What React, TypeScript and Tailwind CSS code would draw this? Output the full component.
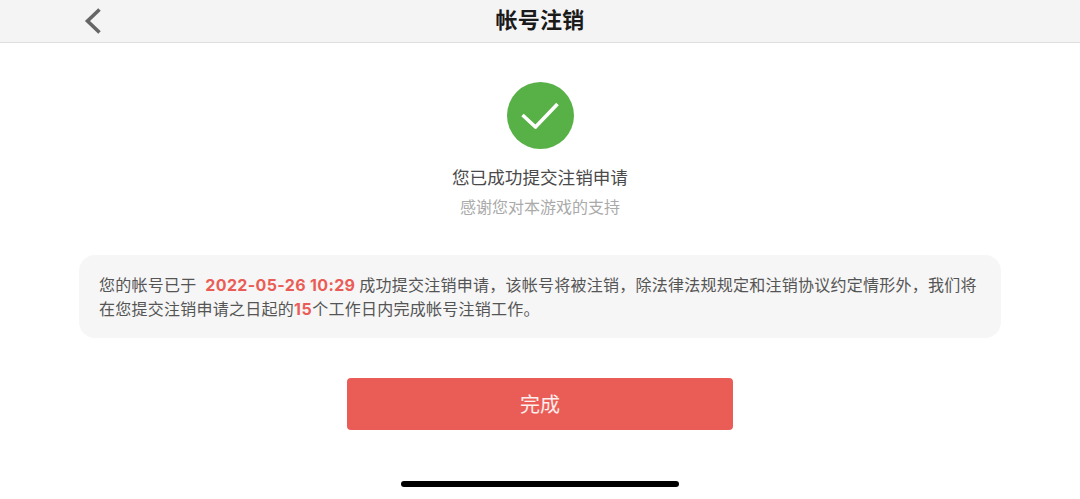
export default function App() {
  return (
    <div className="w-[1080px] h-[499px] bg-white flex flex-col items-center overflow-hidden font-['Noto_Sans_CJK_SC','Noto_Sans',sans-serif]">
      <div className="w-full h-[43px] bg-[#f4f4f4] border-b border-[#dedede] flex items-center justify-center relative">
        <svg className="absolute left-[84px] top-[7px]" width="18" height="28" viewBox="0 0 18 28" fill="none">
          <path d="M15.5 2.5 L3.5 14 L15.5 25.5" stroke="#666" strokeWidth="3.6" />
        </svg>
        <span className="text-[22px] tracking-[0.3px] font-bold text-[#1a1a1a] leading-none -mt-[7px]">帐号注销</span>
      </div>
      <div className="mt-[39px] w-[67px] h-[67px] rounded-full bg-[#57b146] flex items-center justify-center">
        <svg width="38" height="27" viewBox="0 0 38 27" fill="none">
          <path d="M1.5 13 L14.5 25 L36.5 2" stroke="#fff" strokeWidth="3.6" />
        </svg>
      </div>
      <div className="mt-[15px] text-[17.6px] leading-[26px] text-[#4a4a4a]">您已成功提交注销申请</div>
      <div className="mt-[3px] text-[16px] leading-[26px] text-[#aaa]">感谢您对本游戏的支持</div>
      <div className="mt-[36px] w-[922px] h-[83px] rounded-[16px] bg-[#f6f6f6] px-[20px] py-[18px] text-[16px] tracking-[0.25px] leading-[23px] text-[#555]">
        您的帐号已于 <span className="font-['Inter'] font-bold tracking-[0.35px] text-[#ea5d56] ml-[5px]">2022-05-26 10:29</span> 成功提交注销申请，该帐号将被注销，除法律法规规定和注销协议约定情形外，我们将在您提交注销申请之日起的<span className="font-['Inter'] font-bold tracking-[0.6px] text-[#ea5d56]">15</span>个工作日内完成帐号注销工作。
      </div>
      <div className="mt-[40px] w-[386px] h-[52px] rounded-[4px] bg-[#ea5d56] flex items-center justify-center text-[20px] text-white/90">完成</div>
      <div className="mt-[51px] w-[278px] h-[6px] rounded-full bg-black" />
    </div>
  )
}
